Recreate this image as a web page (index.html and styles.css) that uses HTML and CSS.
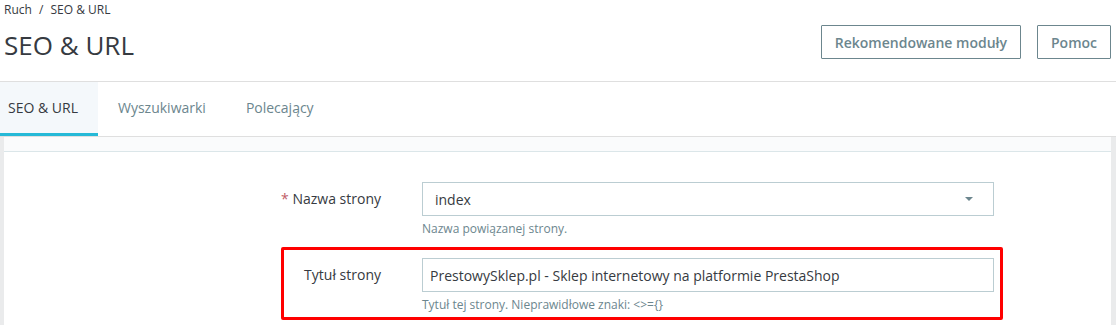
FILE: index.html
```html
<!DOCTYPE html>
<html lang="pl">
<head>
<meta charset="UTF-8" />
<title>SEO &amp; URL</title>
<link rel="stylesheet" href="styles.css">
</head>
<body>

<div class="page-head">
  <div class="breadcrumb">Ruch <span class="sep">/</span> SEO &amp; URL</div>
  <div class="title-row">
    <h1 class="page-title">SEO &amp; URL</h1>
    <div class="toolbar">
      <button class="btn-outline">Rekomendowane moduły</button>
      <button class="btn-outline">Pomoc</button>
    </div>
  </div>
</div>

<div class="tabs">
  <a class="tab active">SEO &amp; URL</a>
  <a class="tab">Wyszukiwarki</a>
  <a class="tab">Polecający</a>
</div>

<div class="content">
  <div class="card">
    <div class="card-header"></div>
    <div class="card-body">
      <div class="form-row">
        <label class="form-label"><span><span class="required">*</span> Nazwa strony</span></label>
        <div class="form-field">
          <div class="select">
            <span>index</span>
            <span class="caret"></span>
          </div>
          <div class="help">Nazwa powiązanej strony.</div>
        </div>
      </div>
      <div class="form-row highlight">
        <label class="form-label"><span>Tytuł strony</span></label>
        <div class="form-field">
          <input class="text-input" type="text" value="PrestowySklep.pl - Sklep internetowy na platformie PrestaShop">
          <div class="help">Tytuł tej strony. Nieprawidłowe znaki: &lt;&gt;={}</div>
        </div>
      </div>
    </div>
  </div>
</div>

</body>
</html>
```

FILE: styles.css
```css
body {
  margin: 0;
  font-family: "Open Sans", "Liberation Sans", sans-serif;
  color: #363a41;
  background-color: #fff;
  overflow: hidden;
}
.page-head {
  padding: 2px 5px 0 4px;
  height: 79px;
}
.breadcrumb {
  font-size: 12px;
  line-height: 16px;
}
.breadcrumb .sep {
  margin: 0 4px;
}
.title-row {
  display: flex;
  justify-content: space-between;
  align-items: flex-start;
}
.page-title {
  margin: 9px 0 0;
  font-size: 26px;
  font-weight: 400;
  line-height: 36px;
}
.toolbar {
  display: flex;
  gap: 16px;
  margin-top: 7px;
}
.btn-outline {
  height: 34px;
  padding: 0 13px;
  border: 1px solid #6c868e;
  border-radius: 1px;
  background: #fff;
  color: #6c868e;
  font-family: inherit;
  font-size: 14px;
  font-weight: 600;
}
.tabs {
  display: flex;
  border-top: 1px solid #dfdfdf;
  border-bottom: 1px solid #dfdfdf;
  height: 54px;
}
.tab {
  display: flex;
  align-items: center;
  padding: 0 20px;
  font-size: 14px;
  color: #6c868e;
  border-bottom: 3px solid transparent;
}
.tab:first-child {
  padding-left: 8px;
}
.tab.active {
  color: #363a41;
  background-color: #f4f8fb;
  border-bottom-color: #25b9d7;
}
.content {
  background-color: #eaebec;
  padding: 0 5px 0 4px;
  height: 200px;
}
.card {
  background: #fff;
  height: 100%;
}
.card-header {
  height: 14px;
  background-color: #fafbfc;
  border-bottom: 1px solid #dbe6e9;
}
.card-body {
  padding: 19px 0 0 277px;
}
.form-row {
  display: grid;
  grid-template-columns: 138px 572px;
  width: 710px;
  padding: 8px 6px 4px 0;
  border: 3px solid transparent;
  border-radius: 2px;
  margin-bottom: 3px;
}
.form-row.highlight {
  border-color: #f00;
}
.form-label {
  display: flex;
  justify-content: flex-end;
  font-size: 14px;
  line-height: 34px;
  padding-right: 41px;
  white-space: nowrap;
}
.required {
  color: #c05c67;
}
.select {
  display: flex;
  justify-content: space-between;
  align-items: center;
  height: 34px;
  box-sizing: border-box;
  padding: 0 20px 0 12px;
  border: 1px solid #bbcdd2;
  font-size: 14px;
}
.caret {
  width: 0;
  height: 0;
  border-left: 4px solid transparent;
  border-right: 4px solid transparent;
  border-top: 4px solid #6c868e;
}
.text-input {
  display: block;
  width: 100%;
  height: 34px;
  box-sizing: border-box;
  padding: 0 7px;
  border: 1px solid #bbcdd2;
  border-radius: 0;
  font-family: inherit;
  font-size: 14px;
  color: #363a41;
}
.help {
  margin-top: 5px;
  font-size: 12px;
  line-height: 16px;
  color: #6c868e;
}
```
